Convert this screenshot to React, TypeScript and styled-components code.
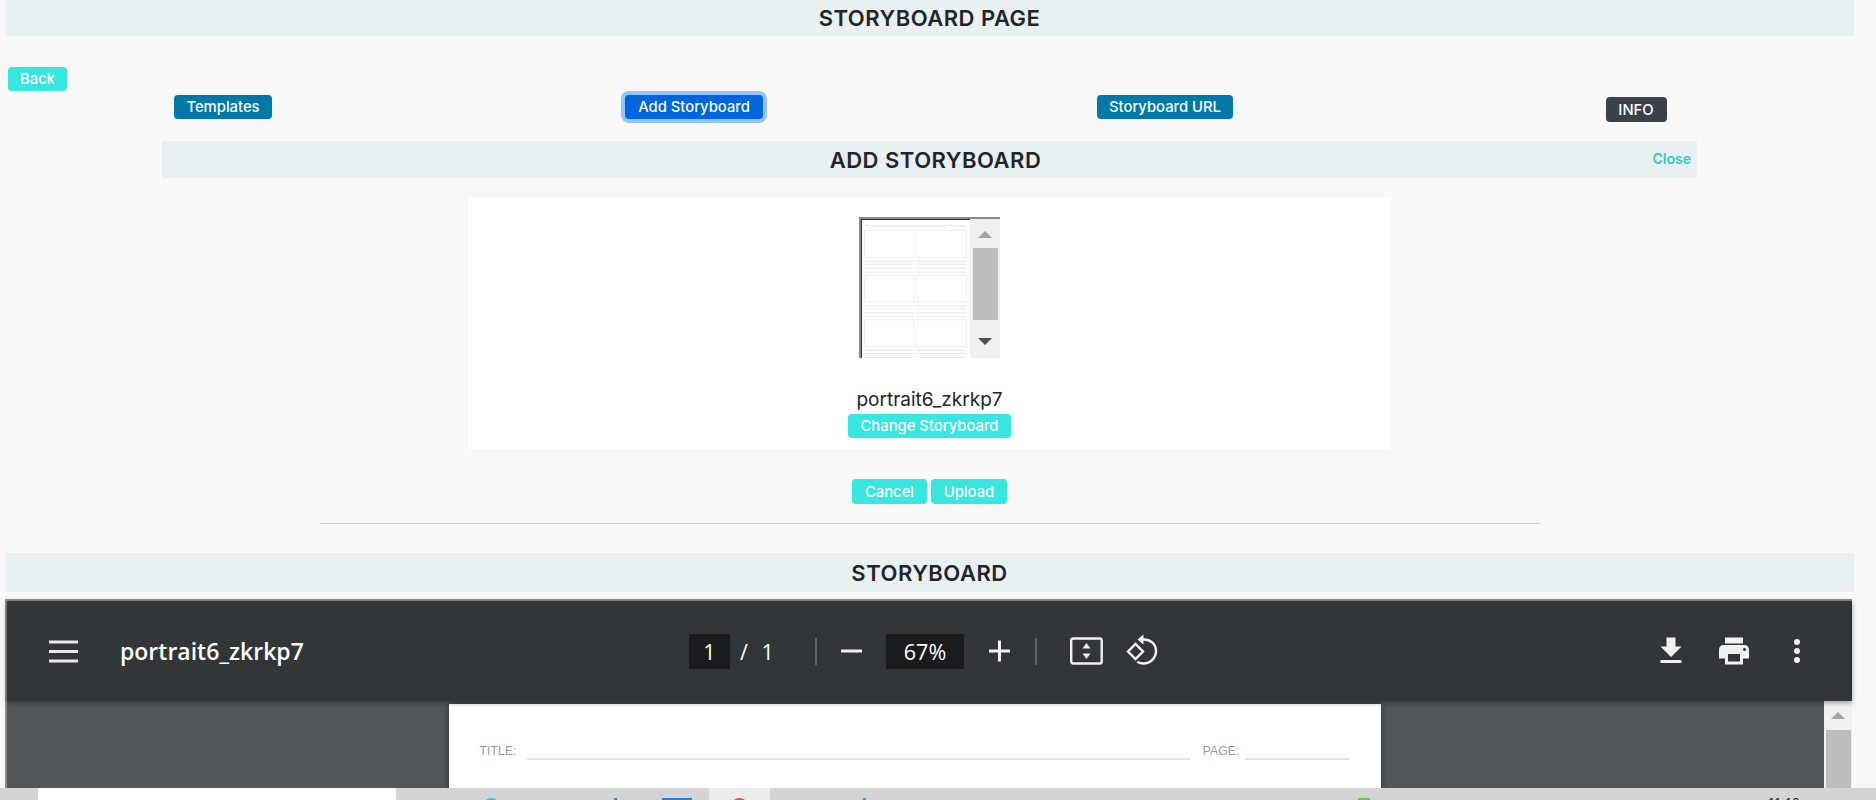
import React from "react";
import styled, { createGlobalStyle } from "styled-components";

const GlobalStyle = createGlobalStyle`
  html, body {
    margin: 0;
    height: 100%;
    overflow: hidden;
    background: #f8f8f8;
  }
  body {
    font-family: "Inter", "Noto Sans", sans-serif;
    color: #212529;
  }
`;

const Page = styled.div`
  height: 800px;
  display: flex;
  flex-direction: column;
  overflow: hidden;
`;

const Content = styled.div`
  flex: 1;
  min-height: 0;
  display: flex;
  flex-direction: column;
  padding: 0 22px 0 5px;
`;

const TitleBar = styled.div<{ $height: number }>`
  height: ${(p) => p.$height}px;
  flex: none;
  display: flex;
  align-items: center;
  justify-content: center;
  background: #e9f0f2;
  font-size: 22px;
  font-weight: 600;
  letter-spacing: 0.5px;
  color: #212529;
  position: relative;
`;

const Button = styled.button<{ $color?: string }>`
  height: 24px;
  padding: 0 12px;
  border: 0;
  border-radius: 4px;
  background: ${(p) => p.$color || "#37e6df"};
  color: #fff;
  font-family: inherit;
  font-size: 14.8px;
  font-weight: 500;
  white-space: nowrap;
`;

const BackButton = styled(Button)`
  align-self: flex-start;
  width: 59px;
  margin: 31px 0 0 3px;
  padding: 0;
`;

const ActionRow = styled.div`
  display: grid;
  grid-template-columns: repeat(4, 471px);
  justify-items: center;
  align-items: start;
  margin: 4px 0 19px -17.5px;
  flex: none;
`;

const FocusButton = styled(Button)`
  width: 138px;
  padding: 0;
  box-shadow: 0 0 0 4px #93c4fb;
`;

const InfoButton = styled(Button)`
  width: 61px;
  height: 25px;
  padding: 0;
  margin-top: 2px;
`;

const AddPanel = styled.section`
  margin: 0 157px;
  display: flex;
  flex-direction: column;
  align-items: center;
  flex: none;
`;

const PanelBar = styled(TitleBar)`
  align-self: stretch;
  padding-left: 12px;
`;

const CloseLink = styled.a`
  position: absolute;
  right: 6px;
  top: 9px;
  font-size: 14px;
  font-weight: 600;
  letter-spacing: 0;
  color: #2fcdc7;
`;

const Card = styled.div`
  width: 923px;
  height: 252px;
  margin-top: 19px;
  background: #fff;
  display: flex;
  flex-direction: column;
  align-items: center;
  padding-top: 20px;
  box-sizing: border-box;
`;

const Thumb = styled.div`
  width: 141px;
  height: 141px;
  display: flex;
  box-sizing: border-box;
  border-top: 2px solid #8a8a8a;
  border-left: 2px solid #8a8a8a;
  background: #fff;
`;

const ThumbDoc = styled.svg`
  width: 109px;
  height: 139px;
  flex: none;
  border-top: 1px solid #333;
  border-left: 1px solid #333;
  box-sizing: border-box;
`;

const ThumbScroll = styled.div`
  flex: 1;
  background: #f0f0f0;
  display: flex;
  flex-direction: column;
  align-items: center;
`;

const ThumbThumb = styled.div`
  width: 25px;
  height: 72px;
  margin-top: 10px;
  background: #bdbdbd;
`;

const Arrow = styled.div<{ $down?: boolean; $color: string; $size: number }>`
  width: 0;
  height: 0;
  border-left: ${(p) => p.$size}px solid transparent;
  border-right: ${(p) => p.$size}px solid transparent;
  ${(p) => (p.$down ? "border-top" : "border-bottom")}: ${(p) => Math.round(p.$size * 0.95)}px solid ${(p) => p.$color};
`;

const ThumbArrowUp = styled(Arrow)`
  margin-top: 12px;
`;

const ThumbArrowDown = styled(Arrow)`
  margin-top: 18px;
`;

const FileName = styled.div`
  margin-top: 31px;
  font-size: 19px;
  line-height: 22px;
  color: #212529;
`;

const ChangeButton = styled(Button)`
  width: 163px;
  padding: 0;
  margin-top: 3px;
`;

const UploadRow = styled.div`
  display: flex;
  gap: 4px;
  margin-top: 30px;
`;

const SmallButton = styled(Button)<{ $w: number }>`
  width: ${(p) => p.$w}px;
  height: 25px;
  padding: 0;
`;

const Rule = styled.hr`
  width: 1220px;
  margin: 19px 0 29px;
  border: 0;
  border-top: 1px solid #ccd3d3;
`;

const Viewer = styled.div`
  flex: 1;
  min-height: 0;
  margin-top: 7px;
  margin-right: 2px;
  display: flex;
  flex-direction: column;
  border-top: 2px solid #8a8a8a;
  border-left: 2px solid #8a8a8a;
  background: #525659;
`;

const Toolbar = styled.div`
  height: 100px;
  flex: none;
  display: flex;
  align-items: center;
  box-sizing: border-box;
  background: #323639;
  color: #fff;
  position: relative;
  z-index: 1;
  box-shadow: 0 2px 5px rgba(0, 0, 0, 0.35);
`;

const ToolLeft = styled.div`
  width: 682px;
  flex: none;
  display: flex;
  align-items: center;
  padding-left: 42px;
  box-sizing: border-box;
`;

const DocTitle = styled.div`
  margin-left: 42px;
  font-family: "Open Sans", sans-serif;
  font-size: 23px;
  font-weight: 600;
`;

const ToolCenter = styled.div`
  display: flex;
  align-items: center;
  font-family: "Open Sans", sans-serif;
  font-size: 21.5px;
`;

const DarkField = styled.div<{ $w: number; $ml?: number }>`
  width: ${(p) => p.$w}px;
  height: 35px;
  margin-left: ${(p) => p.$ml || 0}px;
  display: flex;
  align-items: center;
  justify-content: center;
  background: #191b1c;
`;

const PageOf = styled.span`
  width: 85px;
  flex: none;
  padding-left: 10px;
  box-sizing: border-box;
  word-spacing: 8px;
`;

const ToolSep = styled.div<{ $ml: number; $mr: number }>`
  width: 2px;
  height: 27px;
  margin: 0 ${(p) => p.$mr}px 0 ${(p) => p.$ml}px;
  background: #5f6368;
`;

const ToolIcon = styled.svg<{ $w: number; $ml?: number }>`
  width: ${(p) => p.$w}px;
  height: 36px;
  flex: none;
  margin-left: ${(p) => p.$ml || 0}px;
  display: block;
`;

const ToolRight = styled.div`
  margin-left: auto;
  display: flex;
  gap: 27px;
  padding-right: 37px;
`;

const ViewerBody = styled.div`
  flex: 1;
  min-height: 0;
  display: flex;
  overflow: hidden;
`;

const PaperArea = styled.div`
  flex: 1;
  display: flex;
  justify-content: center;
  padding: 3px 2px 0 0;
`;

const Paper = styled.div`
  width: 932px;
  height: 400px;
  background: #fff;
  box-shadow: 0 0 6px rgba(0, 0, 0, 0.45);
  box-sizing: border-box;
  padding: 40px 31px 0;
  display: flex;
  align-items: flex-start;
  font-family: "Liberation Sans", sans-serif;
  font-size: 12px;
  letter-spacing: 0.2px;
  color: #999;
`;

const PaperLine = styled.div<{ $w: number; $ml: number }>`
  width: ${(p) => p.$w}px;
  margin-left: ${(p) => p.$ml}px;
  height: 14px;
  border-bottom: 2px solid #e6e6e6;
  flex: none;
`;

const PaperLabel = styled.span<{ $ml?: number }>`
  margin-left: ${(p) => p.$ml || 0}px;
  line-height: 14px;
`;

const ViewerScroll = styled.div`
  width: 28px;
  flex: none;
  background: #f1f1f1;
  display: flex;
  flex-direction: column;
  align-items: center;
`;

const ViewerArrow = styled(Arrow)`
  margin-top: 11px;
`;

const ViewerThumb = styled.div`
  width: 25px;
  height: 200px;
  margin-top: 11px;
  background: #bdbdbd;
`;

const Taskbar = styled.div`
  height: 12px;
  flex: none;
  display: flex;
  overflow: hidden;
  background: #d4d4d4;
  position: relative;
  z-index: 2;
`;

const SearchBox = styled.div`
  width: 358px;
  height: 12px;
  margin-left: 38px;
  flex: none;
  background: #fff;
`;

const TrayDab = styled.div<{ $ml: number; $w: number; $color: string; $round?: boolean }>`
  width: ${(p) => p.$w}px;
  height: ${(p) => p.$w}px;
  margin: 10px 0 0 ${(p) => p.$ml}px;
  flex: none;
  background: ${(p) => p.$color};
  border-radius: ${(p) => (p.$round ? "50%" : "0")};
`;

const ActiveTab = styled.div`
  width: 61px;
  height: 12px;
  margin-left: 17px;
  flex: none;
  background: #ececec;
  display: flex;
  justify-content: center;
`;

const Clock = styled.div`
  margin-left: 398px;
  padding-top: 8px;
  font-family: "Liberation Sans", sans-serif;
  font-size: 13px;
  line-height: 14px;
  color: #111;
`;

// tiny preview of the storyboard sheet
const rows = [10, 55, 100];
const columns = [2, 55];

function SheetPreview() {
  return (
    <ThumbDoc viewBox="0 0 109 139">
      <rect width="109" height="139" fill="#fff" />
      <path d="M3 5h4M8 6h78M87 5h4M92 6h13" stroke="#e4e4e4" strokeWidth="1" fill="none" />
      {rows.map((y) =>
        columns.map((x) => (
          <g key={`${x}-${y}`} fill="none" stroke="#efefef">
            <rect x={x + 0.5} y={y + 0.5} width="50" height="27" />
            <path
              d={`M${x} ${y + 31.5}h50M${x} ${y + 34.5}h50M${x} ${y + 38.5}h50M${x} ${y + 42.5}h50`}
              stroke="#e6e6e6"
            />
          </g>
        ))
      )}
    </ThumbDoc>
  );
}

function Menu() {
  return (
    <ToolIcon $w={29} viewBox="0 0 29 36">
      <path d="M0 9h29M0 18.500h29M0 28h29" stroke="#e8e8e8" strokeWidth="3" />
    </ToolIcon>
  );
}

export default function App() {
  return (
    <Page>
      <GlobalStyle />
      <Content>
        <TitleBar $height={36}>STORYBOARD PAGE</TitleBar>
        <BackButton>Back</BackButton>
        <ActionRow>
          <Button $color="#0079a8">Templates</Button>
          <FocusButton $color="#0064dc">Add Storyboard</FocusButton>
          <Button $color="#0079a8">Storyboard URL</Button>
          <InfoButton $color="#3a4149">INFO</InfoButton>
        </ActionRow>
        <AddPanel>
          <PanelBar $height={37}>
            ADD STORYBOARD
            <CloseLink>Close</CloseLink>
          </PanelBar>
          <Card>
            <Thumb>
              <SheetPreview />
              <ThumbScroll>
                <ThumbArrowUp $size={7} $color="#a3a3a3" />
                <ThumbThumb />
                <ThumbArrowDown $down $size={7} $color="#505050" />
              </ThumbScroll>
            </Thumb>
            <FileName>portrait6_zkrkp7</FileName>
            <ChangeButton>Change Storyboard</ChangeButton>
          </Card>
          <UploadRow>
            <SmallButton $w={75}>Cancel</SmallButton>
            <SmallButton $w={76}>Upload</SmallButton>
          </UploadRow>
          <Rule />
        </AddPanel>
        <TitleBar $height={39}>STORYBOARD</TitleBar>
        <Viewer>
          <Toolbar>
            <ToolLeft>
              <Menu />
              <DocTitle>portrait6_zkrkp7</DocTitle>
            </ToolLeft>
            <ToolCenter>
              <DarkField $w={41}>1</DarkField>
              <PageOf>/ 1</PageOf>
              <ToolSep $ml={0} $mr={23} />
              <ToolIcon $w={23} viewBox="0 0 23 36">
                <path d="M1 18h21" stroke="#f1f1f1" strokeWidth="3" />
              </ToolIcon>
              <DarkField $w={78} $ml={23}>
                67%
              </DarkField>
              <ToolIcon $w={23} $ml={24} viewBox="0 0 23 36">
                <path d="M1 18h21M11.500 7.500v21" stroke="#f1f1f1" strokeWidth="3" />
              </ToolIcon>
              <ToolSep $ml={24} $mr={33} />
              <ToolIcon $w={33} viewBox="0 0 33 36">
                <rect x="1.200" y="5.500" width="30.500" height="25" rx="2" fill="none" stroke="#f1f1f1" strokeWidth="2.400" />
                <path d="M16.500 10l4 5.500h-8zM16.500 26l4-5.500h-8z" fill="#f1f1f1" />
              </ToolIcon>
              <ToolIcon $w={32} $ml={23} viewBox="0 0 32 36">
                <path d="M2 18.500l7.500-7.500 7.500 7.500-7.500 7.500z" fill="none" stroke="#f1f1f1" strokeWidth="2.400" />
                <path
                  d="M17 6.500c7-.5 13 4.500 13 11.500 0 7-5.700 12.500-12.500 12.500-2.300 0-4.500-.6-6.200-1.800"
                  fill="none"
                  stroke="#f1f1f1"
                  strokeWidth="2.400"
                />
                <path d="M17.500 1.500v10l-6-5z" fill="#f1f1f1" />
              </ToolIcon>
            </ToolCenter>
            <ToolRight>
              <ToolIcon $w={36} viewBox="0 0 24 24" fill="#f1f1f1">
                <path d="M19 9h-4V3H9v6H5l7 7 7-7zM5 18v2h14v-2H5z" />
              </ToolIcon>
              <ToolIcon $w={36} viewBox="0 0 24 24" fill="#f1f1f1">
                <path d="M19 8H5c-1.660 0-3 1.340-3 3v6h4v4h12v-4h4v-6c0-1.660-1.340-3-3-3zm-3 11H8v-5h8v5zm3-7c-.550 0-1-.450-1-1s.450-1 1-1 1 .450 1 1-.450 1-1 1zm-1-9H6v4h12V3z" />
              </ToolIcon>
              <ToolIcon $w={36} viewBox="0 0 24 24" fill="#f1f1f1">
                <path d="M12 8a2 2 0 1 0 0-4 2 2 0 0 0 0 4zm0 2a2 2 0 1 0 0 4 2 2 0 0 0 0-4zm0 6a2 2 0 1 0 0 4 2 2 0 0 0 0-4z" />
              </ToolIcon>
            </ToolRight>
          </Toolbar>
          <ViewerBody>
            <PaperArea>
              <Paper>
                <PaperLabel>TITLE:</PaperLabel>
                <PaperLine $w={664} $ml={10} />
                <PaperLabel $ml={12}>PAGE:</PaperLabel>
                <PaperLine $w={104} $ml={5} />
              </Paper>
            </PaperArea>
            <ViewerScroll>
              <ViewerArrow $size={7} $color="#a3a3a3" />
              <ViewerThumb />
            </ViewerScroll>
          </ViewerBody>
        </Viewer>
      </Content>
      <Taskbar>
        <SearchBox />
        <TrayDab $ml={87} $w={17} $color="#2fc7d6" $round />
        <TrayDab $ml={114} $w={3} $color="#4d7fa8" />
        <TrayDab $ml={45} $w={30} $color="#1f7bf2" />
        <ActiveTab>
          <TrayDab $ml={0} $w={17} $color="#e8453c" $round />
        </ActiveTab>
        <TrayDab $ml={93} $w={3} $color="#5f86ad" />
        <TrayDab $ml={492} $w={12} $color="#7cc142" />
        <Clock>11:10</Clock>
      </Taskbar>
    </Page>
  );
}
